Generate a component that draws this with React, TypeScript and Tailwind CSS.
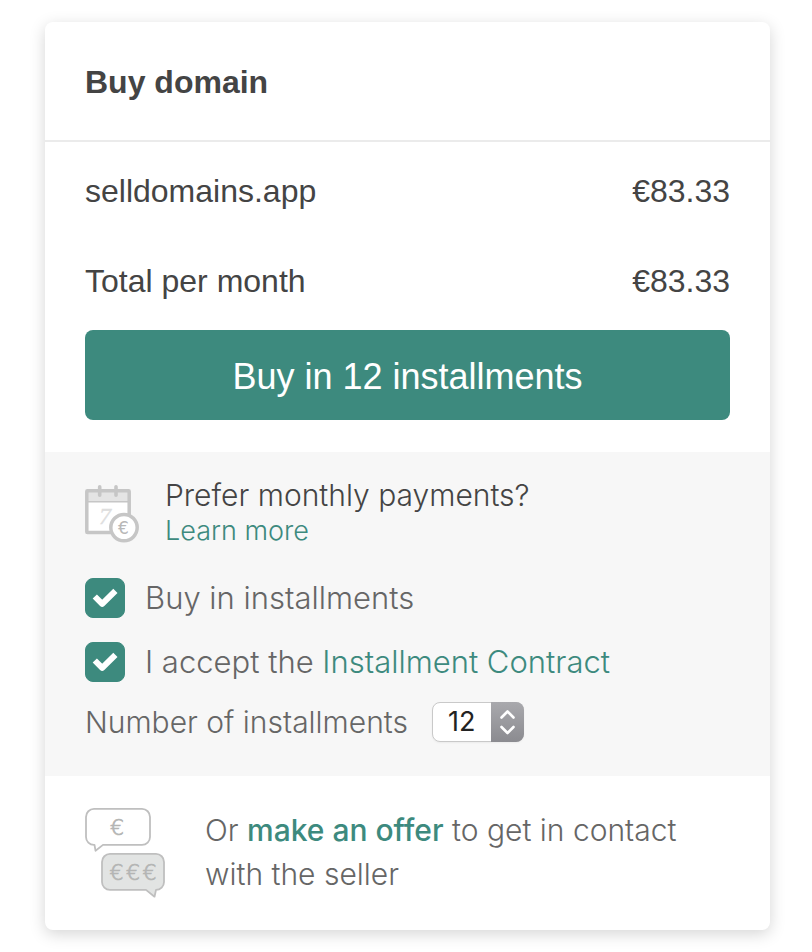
import React, { useState } from 'react';

const INSTALLMENT_OPTIONS = [2, 3, 6, 12];

function CalendarIcon() {
  return (
    <svg width="54" height="58" viewBox="0 0 54 58" fill="none" className="mt-2.5 shrink-0" aria-hidden="true">
      <rect x="1.7" y="5.7" width="42.6" height="42" fill="#fff" />
      <rect x="3" y="7" width="40" height="9" fill="#e4e4e4" />
      <path d="M3 16.8h40" stroke="#c6c6c6" strokeWidth="1.4" />
      <rect x="1.8" y="5.8" width="42.4" height="41.8" rx="0.6" stroke="#c6c6c6" strokeWidth="3.5" />
      <path d="M14.7 1.8v8.4M31 1.8v8.4" stroke="#c6c6c6" strokeWidth="3.6" strokeLinecap="round" />
      <text
        x="14"
        y="39"
        fontSize="24"
        fontStyle="italic"
        fill="#dedede"
        stroke="#dedede"
        strokeWidth="0.4"
        className="font-['Liberation_Serif',serif]"
      >
        7
      </text>
      <circle cx="39" cy="42.6" r="13.2" fill="#fff" stroke="#c6c6c6" strokeWidth="3.5" />
      <text x="38.5" y="48.8" fontSize="17" textAnchor="middle" fill="#b8b8b8" className="font-['DejaVu_Sans',sans-serif] font-normal">
        €
      </text>
    </svg>
  );
}

function OfferIcon() {
  return (
    <svg width="80" height="90" viewBox="0 0 80 90" fill="none" className="shrink-0" aria-hidden="true">
      <g stroke="#bfbfbf" strokeWidth="1.8" strokeLinejoin="round">
        <path d="M9 .9h48a8 8 0 0 1 8 8v20a8 8 0 0 1-8 8H18l-7.5 5.8-1-5.8H9a8 8 0 0 1-8-8v-20a8 8 0 0 1 8-8z" fill="#fff" />
        <path
          d="M25 45.9h46a8 8 0 0 1 8 8v20a8 8 0 0 1-8 8l-1.5 6.8-8.5-6.8H25a8 8 0 0 1-8-8v-20a8 8 0 0 1 8-8z"
          fill="#e2e4e3"
        />
      </g>
      <g
        fontSize="22"
        textAnchor="middle"
        fill="#b4b5b4"
        stroke="#b4b5b4"
        strokeWidth="0.7"
        className="font-['DejaVu_Sans',sans-serif] font-extralight"
      >
        <text x="32" y="27">€</text>
        <text x="31.5" y="72">€</text>
        <text x="48" y="72">€</text>
        <text x="64.5" y="72">€</text>
      </g>
    </svg>
  );
}

type CheckOptionProps = {
  id: string;
  checked: boolean;
  onChange: (checked: boolean) => void;
  children: React.ReactNode;
};

function CheckOption({ id, checked, onChange, children }: CheckOptionProps) {
  return (
    <div className="flex items-center gap-5">
      <span className="relative flex h-10 w-10 shrink-0">
        <input
          id={id}
          type="checkbox"
          checked={checked}
          onChange={(e) => onChange(e.target.checked)}
          className="peer h-10 w-10 appearance-none rounded-lg border border-[#3d8a7e] bg-white checked:bg-[#3d8a7e]"
        />
        <svg
          viewBox="0 0 40 40"
          className="pointer-events-none absolute inset-0 hidden peer-checked:block"
          fill="none"
          stroke="#fff"
          strokeWidth="6"
          strokeLinejoin="round"
          aria-hidden="true"
        >
          <path d="M9.8 18.5l7.4 7.4 13.2-13" />
        </svg>
      </span>
      <label htmlFor={id} className="text-[31px]">
        {children}
      </label>
    </div>
  );
}

function PriceRow({ label, price }: { label: string; price: string }) {
  return (
    <div className="flex items-center justify-between leading-10">
      <span>{label}</span>
      <span>{price}</span>
    </div>
  );
}

export default function App() {
  const [installments, setInstallments] = useState(true);
  const [accepted, setAccepted] = useState(true);
  const [count, setCount] = useState(12);

  return (
    <main className="min-h-screen bg-white pt-[22px] pr-[42px] pb-[22px] pl-[45px] font-['Liberation_Sans',Arial,sans-serif] text-[32px] text-[#444]">
      <div className="overflow-hidden rounded-lg bg-white shadow-[0_4px_16px_rgba(0,0,0,0.17)]">
        <header className="border-b-2 border-[#ebebeb] px-10 pt-10 pb-[38px]">
          <h1 className="font-bold leading-10">Buy domain</h1>
        </header>

        <section className="px-10 pt-[29px] pb-8">
          <div className="flex flex-col gap-[50px]">
            <PriceRow label="selldomains.app" price="€83.33" />
            <PriceRow label="Total per month" price="€83.33" />
          </div>
          <button type="button" className="mt-[29px] h-[90px] w-full rounded-lg bg-[#3d8a7e] pt-1 text-4xl text-white">
            Buy in {count} installments
          </button>
        </section>

        <section className="bg-[#f7f7f7] px-10 pt-[23px] pb-[34px] font-['Inter','Liberation_Sans',sans-serif] text-[30px] font-light leading-10 text-[#666]">
          <div className="flex items-start gap-[26px]">
            <CalendarIcon />
            <div>
              <p className="text-[#444]">Prefer monthly payments?</p>
              <a href="#learn-more" className="block text-[27px] leading-8 text-[#3d8a7e]">
                Learn more
              </a>
            </div>
          </div>

          <div className="mt-[31px] flex flex-col gap-6">
            <CheckOption id="installments" checked={installments} onChange={setInstallments}>
              Buy in installments
            </CheckOption>
            <CheckOption id="contract" checked={accepted} onChange={setAccepted}>
              I accept the{' '}
              <a href="#contract" className="text-[#3d8a7e]">
                Installment Contract
              </a>
            </CheckOption>
          </div>

          <div className="mt-5 flex items-center gap-6">
            <label htmlFor="count">Number of installments</label>
            <span className="relative flex">
              <select
                id="count"
                value={count}
                onChange={(e) => setCount(Number(e.target.value))}
                className="h-10 w-[92px] appearance-none rounded-lg border border-[#c9c9c9] bg-white pl-[15px] text-[27px] font-normal leading-9 text-[#222] shadow-xs"
              >
                {INSTALLMENT_OPTIONS.map((n) => (
                  <option key={n} value={n}>
                    {n}
                  </option>
                ))}
              </select>
              <span className="pointer-events-none absolute inset-y-0 right-0 w-[33px] rounded-r-lg bg-linear-to-b from-[#a9a9ad] to-[#8b8b90]">
                <svg viewBox="0 0 33 40" fill="none" stroke="#fff" strokeWidth="2.6" strokeLinecap="round" strokeLinejoin="round" aria-hidden="true">
                  <path d="M10.5 15.5l6-6 6 6M10.5 25l6 6 6-6" />
                </svg>
              </span>
            </span>
          </div>
        </section>

        <footer className="flex items-center gap-10 px-10 py-8 font-['Inter','Liberation_Sans',sans-serif] text-[30px] font-light leading-11 text-[#666]">
          <OfferIcon />
          <p className="pb-0.5">
            Or{' '}
            <a href="#offer" className="font-medium text-[#3d8a7e]">
              make an offer
            </a>{' '}
            to get in contact with the seller
          </p>
        </footer>
      </div>
    </main>
  );
}
